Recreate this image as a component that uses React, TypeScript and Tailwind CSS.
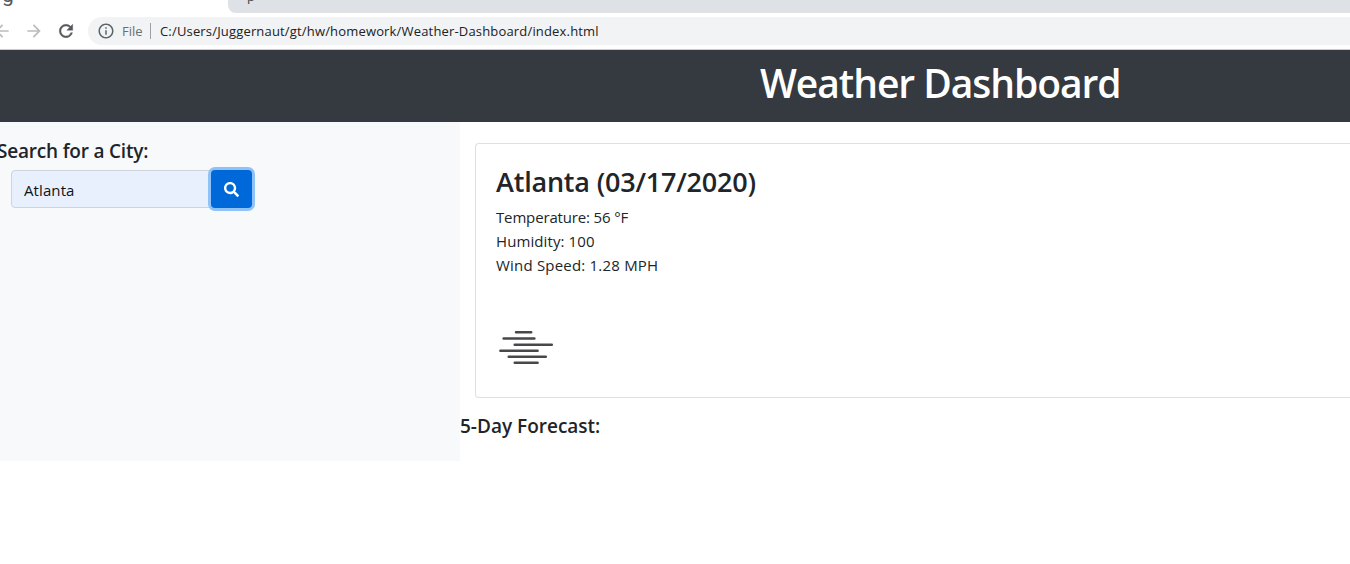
import { FaSearch } from "react-icons/fa";
import { MdArrowBack, MdArrowForward, MdInfoOutline } from "react-icons/md";

function ReloadIcon() {
  return (
    <svg
      className="ml-3 size-5 shrink-0"
      viewBox="0 0 24 24"
      fill="#55585c"
      stroke="#55585c"
      strokeWidth="0.5"
    >
      <path d="M17.65 6.35A7.958 7.958 0 0 0 12 4c-4.42 0-7.99 3.58-7.99 8s3.57 8 7.99 8c3.73 0 6.84-2.55 7.73-6h-2.08A5.99 5.99 0 0 1 12 18c-3.31 0-6-2.69-6-6s2.69-6 6-6c1.66 0 3.14.69 4.22 1.78L13 11h7V4l-2.35 2.35z" />
    </svg>
  );
}

function TabStrip() {
  return (
    <div className="flex h-[13px] bg-white">
      <div className="flex h-[13px] w-[228px] shrink-0 items-end overflow-hidden">
        <span className="mb-[6px] ml-[2px] font-['Roboto',sans-serif] text-[21px] leading-[24px] text-[#55585c]">
          g
        </span>
      </div>
      <div className="flex h-[13px] flex-1 items-end overflow-hidden rounded-bl-lg bg-[#dee1e6] pl-[19px]">
        <span className="mb-[8px] text-[13px] leading-[18px] text-[#3c4043]">p</span>
      </div>
    </div>
  );
}

function Toolbar() {
  return (
    <div className="flex h-[37px] items-start border-b border-[#c8cbd0] bg-white pt-1">
      <div className="flex h-7 w-[88px] shrink-0 items-center overflow-hidden">
        <MdArrowBack className="-ml-[8px] size-5 shrink-0 text-[#babcbe]" />
        <MdArrowForward className="ml-[12px] size-5 shrink-0 text-[#babcbe]" />
        <ReloadIcon />
      </div>
      <div className="flex h-7 flex-1 items-center rounded-l-full bg-[#f1f3f4] pl-[9px] text-[13px]">
        <MdInfoOutline className="size-[18px] text-[#5f6368]" />
        <span className="ml-[7px] w-7 pt-[2px] text-[#6b6f73]">File</span>
        <span className="h-4 w-px bg-[#9aa0a6]" />
        <span className="ml-[9px] whitespace-nowrap pt-[2px] tracking-[0.17px] text-[#202124]">
          C:/Users/Juggernaut/gt/hw/homework/Weather-Dashboard/index.html
        </span>
      </div>
    </div>
  );
}

function MistIcon() {
  return (
    <svg
      className="block h-[38px] w-[58px]"
      viewBox="497 328 58 38"
      fill="none"
      stroke="#48484a"
      strokeWidth="2.5"
      strokeLinecap="round"
    >
      <path d="M516 332.3H531.2M503.6 338.5H534.4M514.7 344.7H551.8M500.4 350.7H537.6M508.7 356.7H545.8M514.7 362.7H537.6" />
    </svg>
  );
}

function Sidebar() {
  return (
    <aside className="h-[339px] w-[460px] shrink-0 bg-[#f8f9fb]">
      <h2 className="-ml-[3px] pt-[17px] text-[19px] font-semibold leading-6 tracking-[-0.2px]">
        Search for a City:
      </h2>
      <div className="ml-[11px] mt-[7px] flex h-[38px]">
        <input
          className="h-[38px] w-[200px] rounded-l border border-[#ced4da] bg-[#e8f0fe] px-3 pt-[2px] text-[15px] tracking-[0.1px] text-[#101214] outline-none"
          defaultValue="Atlanta"
        />
        <button
          aria-label="Search"
          className="z-10 flex w-[41px] items-center justify-center rounded-r rounded-l-sm bg-[#0069d9] text-white ring-[3px] ring-[#8fc2f8]"
        >
          <FaSearch className="size-[15px]" />
        </button>
      </div>
    </aside>
  );
}

function CurrentWeather() {
  return (
    <section className="ml-[15px] mt-[21px] h-[255px] rounded-l border border-r-0 border-[#dfdfdf] pl-5 pt-5">
      <h2 className="mt-px text-[27px] font-semibold leading-[34px] tracking-[-0.2px]">Atlanta (03/17/2020)</h2>
      <div className="mt-[6px] text-[15px] leading-6">
        <p className="tracking-[-0.15px]">Temperature: 56 °F</p>
        <p className="tracking-[0.1px]">Humidity: 100</p>
        <p className="tracking-[0.2px]">Wind Speed: 1.28 MPH</p>
      </div>
      <div className="ml-px mt-[51px]">
        <MistIcon />
      </div>
    </section>
  );
}

export default function App() {
  return (
    <div className="h-[564px] overflow-hidden bg-white font-['Open_Sans','Noto_Sans',sans-serif] text-[#212529]">
      <TabStrip />
      <Toolbar />
      <header className="flex h-[72px] items-start bg-[#343a40] pl-[760px]">
        <h1 className="mt-[9px] whitespace-nowrap text-[39px] font-semibold leading-[48px] tracking-[-1.05px] text-white">
          Weather Dashboard
        </h1>
      </header>
      <main className="flex">
        <Sidebar />
        <div className="flex-1">
          <CurrentWeather />
          <h3 className="mt-4 text-[19px] font-semibold leading-6">5-Day Forecast:</h3>
        </div>
      </main>
    </div>
  );
}
